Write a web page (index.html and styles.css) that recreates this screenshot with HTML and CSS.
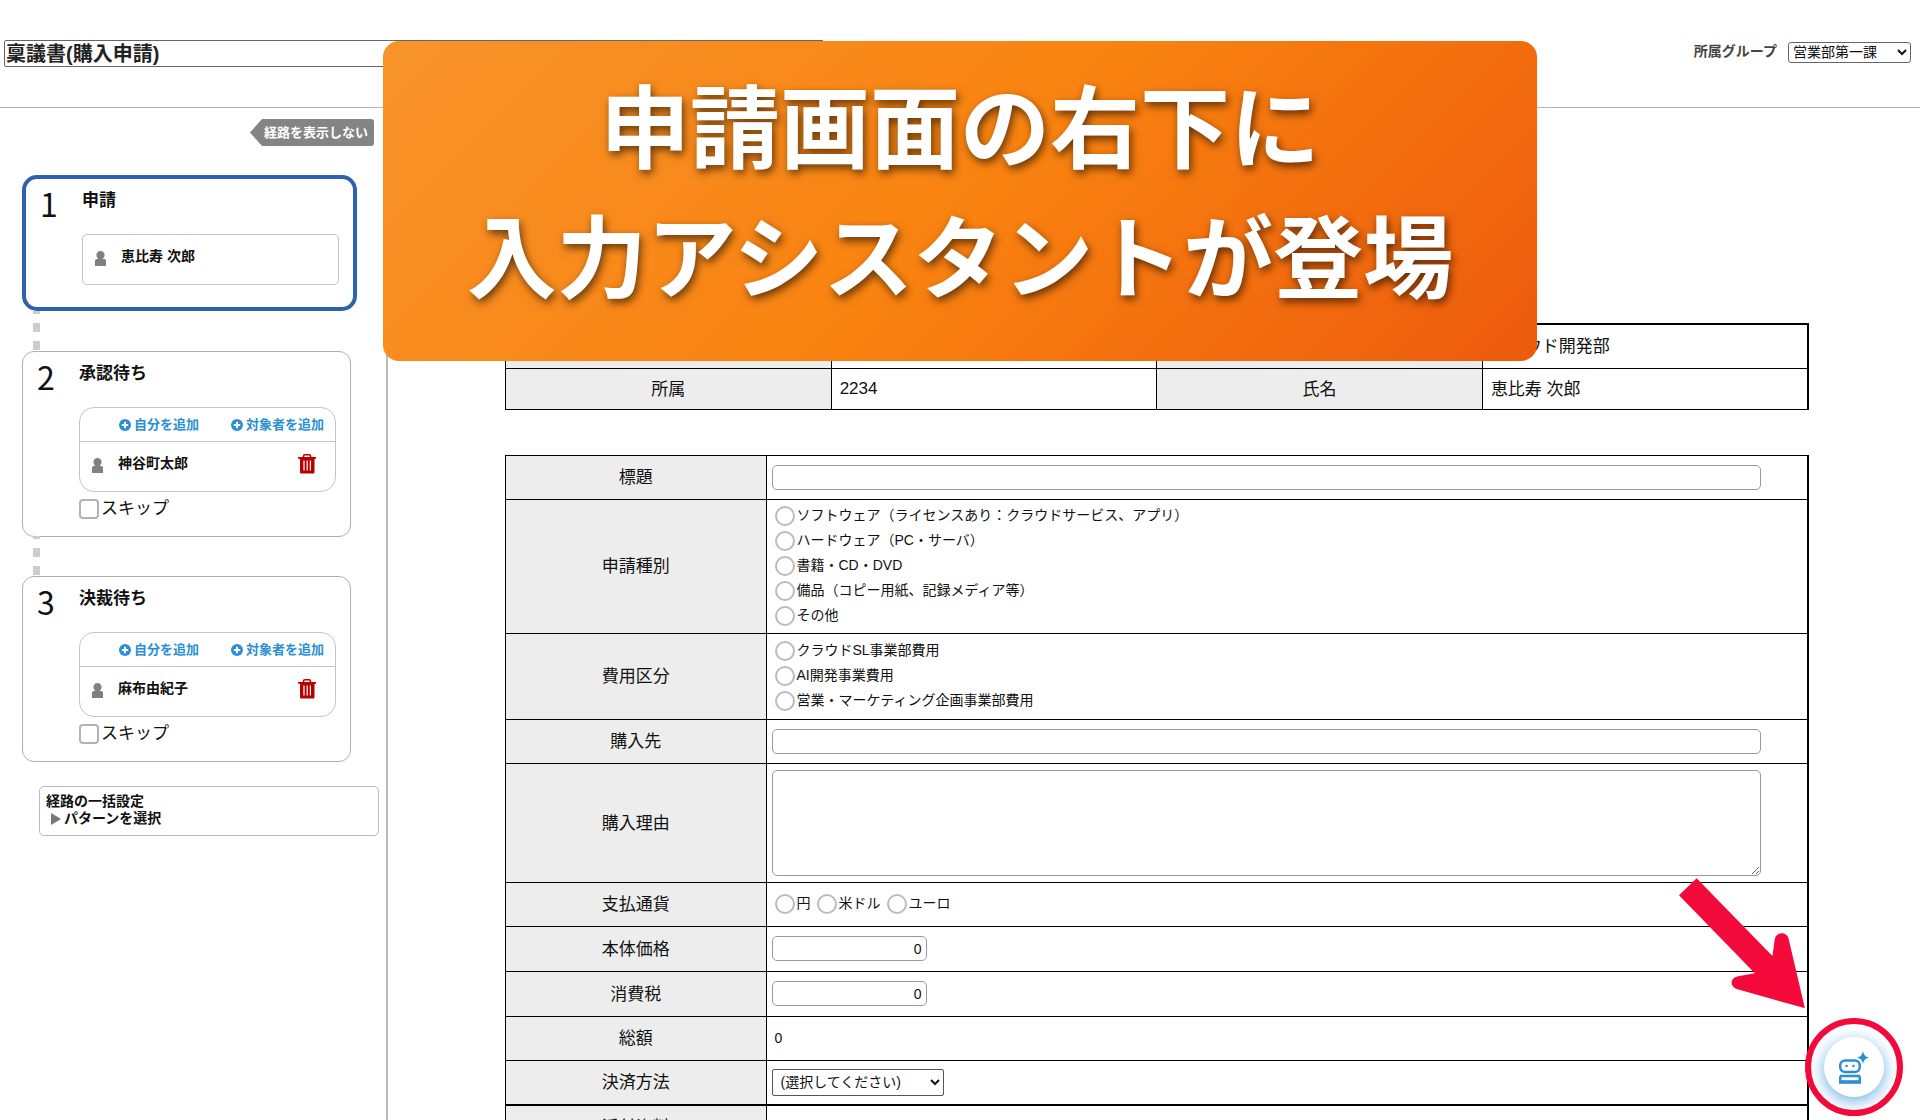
FILE: index.html
```html
<!DOCTYPE html>
<html lang="ja">
<head>
  <meta charset="UTF-8" />
  <meta name="viewport" content="width=device-width, initial-scale=1.0">
  <title>稟議書(購入申請)</title>
  <link rel="stylesheet" href="styles.css">
</head>
<body>
  <!-- shared icons -->
  <svg width="0" height="0" class="sprite">
    <symbol id="icon-user" viewBox="0 0 11 15">
      <path d="M5.500 0C3 0 1.400 1.800 1.400 4c0 1.500.700 2.600 1.600 3.200V8H1.200L0 9.200V15h11V9.200L9.800 8H8v-.8c.900-.6 1.600-1.700 1.600-3.200C9.600 1.800 8 0 5.500 0z" fill="#808080"/>
    </symbol>
    <symbol id="icon-plus" viewBox="0 0 12 12">
      <circle cx="6" cy="6" r="6" fill="#2a8fd4"/>
      <path d="M6 2.800v6.400M2.800 6h6.400" stroke="#fff" stroke-width="2"/>
    </symbol>
    <symbol id="icon-trash" viewBox="0 0 18 20">
      <path d="M5.500 3.500V2.300C5.500 1.300 6.200.8 7 .8h4c.8 0 1.500.5 1.500 1.500v1.200" fill="none" stroke="#b90000" stroke-width="1.600"/>
      <path d="M0 3h18v1.800h-1.500V18c0 1-.6 1.600-1.500 1.600H3.500C2.600 19.600 2 19 2 18V4.800H0z" fill="#b90000"/>
      <path d="M6 6.500v10M9.200 6.500v10M12.400 6.500v10" stroke="#fff" stroke-width="1.200"/>
    </symbol>
  </svg>

  <header class="page-header">
    <input type="text" class="doc-title" value="稟議書(購入申請)" aria-label="書類名" />
    <div class="group-select">
      <label for="group">所属グループ</label>
      <select id="group">
        <option>営業部第一課</option>
      </select>
    </div>
  </header>

  <div class="layout">
    <aside class="route">
      <button type="button" class="route-toggle">経路を表示しない</button>

      <ol class="steps">
        <li class="step current">
          <span class="step-no">1</span>
          <div class="step-body">
            <h2>申請</h2>
            <div class="member-box">
              <div class="member">
                <svg class="user"><use href="#icon-user"/></svg>
                <span>恵比寿 次郎</span>
              </div>
            </div>
          </div>
        </li>
        <li class="step">
          <span class="step-no">2</span>
          <div class="step-body">
            <h2>承認待ち</h2>
            <div class="member-box editable">
              <div class="add-links">
                <a href="#"><svg class="plus"><use href="#icon-plus"/></svg>自分を追加</a>
                <a href="#"><svg class="plus"><use href="#icon-plus"/></svg>対象者を追加</a>
              </div>
              <div class="member">
                <svg class="user"><use href="#icon-user"/></svg>
                <span>神谷町太郎</span>
                <button type="button" class="delete" aria-label="削除"><svg><use href="#icon-trash"/></svg></button>
              </div>
            </div>
            <label class="skip"><input type="checkbox" />スキップ</label>
          </div>
        </li>
        <li class="step">
          <span class="step-no">3</span>
          <div class="step-body">
            <h2>決裁待ち</h2>
            <div class="member-box editable">
              <div class="add-links">
                <a href="#"><svg class="plus"><use href="#icon-plus"/></svg>自分を追加</a>
                <a href="#"><svg class="plus"><use href="#icon-plus"/></svg>対象者を追加</a>
              </div>
              <div class="member">
                <svg class="user"><use href="#icon-user"/></svg>
                <span>麻布由紀子</span>
                <button type="button" class="delete" aria-label="削除"><svg><use href="#icon-trash"/></svg></button>
              </div>
            </div>
            <label class="skip"><input type="checkbox" />スキップ</label>
          </div>
        </li>
      </ol>

      <div class="bulk">
        <strong>経路の一括設定</strong>
        <button type="button" class="pattern">パターンを選択</button>
      </div>
    </aside>

    <main class="form-pane">
      <table class="applicant">
        <tr>
          <th></th>
          <td></td>
          <th></th>
          <td>クラウド開発部</td>
        </tr>
        <tr>
          <th>所属</th>
          <td class="code">2234</td>
          <th>氏名</th>
          <td>恵比寿 次郎</td>
        </tr>
      </table>

      <table class="request">
        <tr>
          <th><label for="subject">標題</label></th>
          <td><input type="text" id="subject" class="wide" /></td>
        </tr>
        <tr class="kind">
          <th>申請種別</th>
          <td>
            <label class="radio"><input type="radio" name="kind" />ソフトウェア（ライセンスあり：クラウドサービス、アプリ）</label>
            <label class="radio"><input type="radio" name="kind" />ハードウェア（PC・サーバ）</label>
            <label class="radio"><input type="radio" name="kind" />書籍・CD・DVD</label>
            <label class="radio"><input type="radio" name="kind" />備品（コピー用紙、記録メディア等）</label>
            <label class="radio"><input type="radio" name="kind" />その他</label>
          </td>
        </tr>
        <tr class="cost">
          <th>費用区分</th>
          <td>
            <label class="radio"><input type="radio" name="cost" />クラウドSL事業部費用</label>
            <label class="radio"><input type="radio" name="cost" />AI開発事業費用</label>
            <label class="radio"><input type="radio" name="cost" />営業・マーケティング企画事業部費用</label>
          </td>
        </tr>
        <tr>
          <th><label for="supplier">購入先</label></th>
          <td><input type="text" id="supplier" class="wide" /></td>
        </tr>
        <tr class="reason">
          <th><label for="reason">購入理由</label></th>
          <td><textarea id="reason" class="wide"></textarea></td>
        </tr>
        <tr>
          <th>支払通貨</th>
          <td>
            <div class="inline-radios">
              <label class="radio"><input type="radio" name="currency" />円</label>
              <label class="radio"><input type="radio" name="currency" />米ドル</label>
              <label class="radio"><input type="radio" name="currency" />ユーロ</label>
            </div>
          </td>
        </tr>
        <tr class="money">
          <th><label for="price">本体価格</label></th>
          <td><input type="text" id="price" class="amount" value="0" /></td>
        </tr>
        <tr class="money">
          <th><label for="tax">消費税</label></th>
          <td><input type="text" id="tax" class="amount" value="0" /></td>
        </tr>
        <tr>
          <th>総額</th>
          <td class="total">0</td>
        </tr>
        <tr class="money">
          <th><label for="payment">決済方法</label></th>
          <td>
            <select id="payment">
              <option>(選択してください)</option>
            </select>
          </td>
        </tr>
        <tr class="attach">
          <th>添付資料</th>
          <td></td>
        </tr>
      </table>
    </main>
  </div>

  <div class="banner">
    <p>申請画面の右下に<br>入力アシスタントが登場</p>
  </div>

  <svg class="arrow" viewBox="0 0 382 393">
    <path d="M0 51 L53 0 L281 234 L288 184 C291 160 326 160 330 184 L378 388 Q379 392 374 390 L176 334 C152 327 152 300 178 295 L228 286 Z" fill="#f30a3b"/>
  </svg>

  <div class="assistant">
    <button type="button" aria-label="入力アシスタント">
      <svg width="30" height="33" viewBox="0 0 30 33">
        <g fill="none" stroke="#2a8fd4" stroke-width="2.500">
          <rect x="1.200" y="9.500" width="19.600" height="11.500" rx="5"/>
          <path d="M2 25h18l.8 1.500V31H1.200v-4.500z"/>
        </g>
        <path d="M0 31h22" stroke="#2a8fd4" stroke-width="3.500"/>
        <circle cx="7.500" cy="15" r="1.300" fill="#2a8fd4"/>
        <circle cx="14.500" cy="15" r="1.300" fill="#2a8fd4"/>
        <path d="M24 0c1 4 2 5.500 6 6.500-4 1-5 2.500-6 6.500-1-4-2-5.500-6-6.500 4-1 5-2.500 6-6.500z" fill="#2a8fd4" stroke="#fff" stroke-width="2" paint-order="stroke"/>
      </svg>
    </button>
  </div>
</body>
</html>
```
FILE: styles.css
```css
* {
  box-sizing: border-box;
}

body {
  margin: 0;
  height: 100vh;
  display: flex;
  flex-direction: column;
  overflow: hidden;
  position: relative;
  background-color: #fff;
  color: #111;
  font-family: "Liberation Sans", "Noto Sans CJK JP", sans-serif;
  font-size: 14px;
}

input, select, textarea, button {
  font-family: inherit;
  font-size: 14px;
  color: #111;
}

.sprite {
  position: absolute;
}

/* Header */
.page-header {
  display: flex;
  justify-content: space-between;
  align-items: flex-start;
  flex: none;
  height: 108px;
  padding: 40px 9px 0 4px;
  border-bottom: 1px solid #b5b5b5;
}

.doc-title {
  width: 43%;
  height: 27px;
  padding: 0 1px 2px;
  border: 1px solid #666;
  border-radius: 2px;
  font-size: 20px;
  font-weight: bold;
  color: #222;
}

.group-select {
  display: flex;
  align-items: center;
  gap: 11px;
}

.group-select label {
  padding-bottom: 4px;
  font-weight: bold;
  color: #444;
}

.group-select select {
  width: 123px;
  height: 21px;
  padding: 0 0 2px;
  border: 1px solid #666;
  border-radius: 3px;
  background-color: #fff;
}

.layout {
  flex: 1;
  display: flex;
  min-height: 0;
}

/* Approval route */
.route {
  flex: none;
  width: 388px;
  padding: 11px 7px 0 22px;
  border-right: 2px solid #bbb;
}

.route-toggle {
  display: block;
  width: 124px;
  height: 27px;
  margin: 0 5px 29px auto;
  padding: 0 0 0 8px;
  border: none;
  border-radius: 3px;
  background-color: #848484;
  clip-path: polygon(0 50%, 12px 0, 100% 0, 100% 100%, 12px 100%);
  color: #fff;
  font-size: 13px;
  font-weight: bold;
  line-height: 27px;
}

.steps {
  list-style: none;
  margin: 0;
  padding: 0;
}

.step {
  position: relative;
  display: flex;
  width: 329px;
  height: 186px;
  margin-bottom: 39px;
  padding: 10px 14px 0 0;
  border: 1px solid #b0b0b0;
  border-radius: 12px;
}

.step.current {
  width: 335px;
  height: 136px;
  margin-bottom: 40px;
  border: 4px solid #2f62ae;
  border-radius: 15px;
}

/* dotted line down to the next step */
.step:not(:last-child)::after {
  content: "";
  position: absolute;
  top: 100%;
  left: 10px;
  width: 7px;
  height: 39px;
  background: repeating-linear-gradient(0deg, #ccc 0 9px, transparent 9px 18px);
}

.step.current::after {
  left: 7px;
  margin-top: 4px;
}

.step:last-child {
  margin-bottom: 24px;
}

.step-no {
  flex: none;
  width: 56px;
  padding-left: 14px;
  font-family: "Noto Sans CJK JP", sans-serif;
  font-size: 32px;
  line-height: 28px;
}

.step-body {
  flex: 1;
}

.step h2 {
  margin: 0 0 21px;
  font-size: 17px;
  line-height: 24px;
}

.member-box {
  border: 1px solid #c4c4c4;
  border-radius: 5px;
}

.member-box.editable {
  border-radius: 15px;
}

.add-links {
  display: flex;
  justify-content: flex-end;
  gap: 32px;
  padding-right: 11px;
  border-bottom: 1px solid #c4c4c4;
}

.add-links a {
  display: flex;
  align-items: center;
  gap: 3px;
  color: #2a8fd4;
  font-size: 13px;
  font-weight: bold;
  line-height: 33px;
  text-decoration: none;
}

.plus {
  width: 12px;
  height: 12px;
}

.member {
  display: flex;
  align-items: center;
  height: 49px;
  padding: 0 19px 9px 12px;
  font-weight: bold;
}

.user {
  width: 11px;
  height: 15px;
  margin: 6px 15px 0 0;
}

.delete {
  margin: 3px 0 0 auto;
  padding: 0;
  border: none;
  background: none;
  cursor: pointer;
}

.delete svg {
  display: block;
  width: 18px;
  height: 20px;
}

.skip {
  display: flex;
  align-items: center;
  gap: 2px;
  margin-top: 7px;
  font-size: 17px;
  line-height: 20px;
}

.skip input {
  appearance: none;
  width: 20px;
  height: 20px;
  margin: 0;
  border: 2px solid #b3b3b3;
  border-radius: 4px;
}

.bulk {
  margin-left: 17px;
  padding: 6px;
  height: 50px;
  border: 1px solid #bbb;
  border-radius: 5px;
  line-height: 17px;
}

.bulk strong {
  display: block;
}

.pattern {
  display: flex;
  align-items: center;
  gap: 3px;
  padding: 0 0 0 5px;
  border: none;
  background: none;
  font-weight: bold;
  line-height: 17px;
}

.pattern::before {
  content: "";
  border-left: 10px solid #777;
  border-top: 6px solid transparent;
  border-bottom: 6px solid transparent;
}

/* Form */
.form-pane {
  flex: 1;
  overflow: hidden;
  padding: 215px 111px 0 117px;
}

table {
  width: 100%;
  border-collapse: collapse;
  table-layout: fixed;
  border-right: 2px solid #000;
  font-size: 17px;
}

th, td {
  height: 44px;
  padding: 0 5px;
  border: 1px solid #000;
}

th {
  padding-bottom: 3px;
  background-color: #ededed;
  font-weight: normal;
}

td {
  text-align: left;
}

.applicant {
  margin-bottom: 45px;
  border-top: 2px solid #000;
}

.applicant td {
  padding: 0 0 3px 8px;
}

.applicant td.code {
  padding-bottom: 0;
}

.applicant tr:last-child > * {
  height: 41px;
}

.request th {
  width: 20%;
}

.request .kind > * {
  height: 134px;
}

.request .cost > * {
  height: 86px;
}

.request .reason > * {
  height: 119px;
}

.request .money > * {
  height: 45px;
}

.request .attach > * {
  border-top: 2px solid #000;
}

.wide, .amount {
  display: block;
  height: 25px;
  border: 1px solid #999;
  border-radius: 5px;
}

.wide {
  width: 96%;
}

textarea.wide {
  height: 106px;
}

.amount {
  width: 155px;
  padding: 0 4px;
  text-align: right;
}

.radio {
  display: flex;
  align-items: center;
  gap: 2px;
  padding-left: 3px;
  font-size: 14px;
  line-height: 23px;
  padding-bottom: 2px;
}

.radio input {
  appearance: none;
  width: 20px;
  height: 20px;
  margin: 2px 0 0;
  border: 2px solid #bbb;
  border-radius: 50%;
}

.inline-radios {
  display: flex;
  gap: 3px;
}

td.total {
  padding-left: 8px;
  font-size: 14px;
}

.request select {
  display: block;
  width: 172px;
  height: 27px;
  padding: 0 4px 1px;
  border: 1px solid #555;
  border-radius: 2px;
  background-color: #fff;
}

/* Overlays */
.banner {
  position: absolute;
  top: 41px;
  left: 383px;
  right: 383px;
  height: 320px;
  border-radius: 16px;
  background: linear-gradient(135deg, #f8932b 0%, #f98310 50%, #ed5a0d 100%);
}

.banner p {
  margin: 0;
  padding-top: 16px;
  color: #fff;
  font-family: "Noto Sans CJK JP", sans-serif;
  font-size: 90px;
  font-weight: bold;
  line-height: 130px;
  text-align: center;
  white-space: nowrap;
  text-shadow: 2px 4px 8px rgba(0, 0, 0, 0.6);
}

.arrow {
  position: absolute;
  right: 114px;
  bottom: 111px;
  width: 127px;
  height: 131px;
}

.assistant {
  position: absolute;
  right: 17px;
  bottom: 4px;
  display: flex;
  justify-content: center;
  align-items: center;
  width: 98px;
  height: 98px;
  border: 6px solid #f30a3b;
  border-radius: 50%;
  background-color: #fff;
  overflow: hidden;
}

.assistant button {
  display: flex;
  justify-content: center;
  align-items: center;
  width: 60px;
  height: 60px;
  padding: 0;
  border: none;
  border-radius: 50%;
  background-color: #fff;
  box-shadow: 0 4px 16px rgba(42, 143, 212, 0.7);
  cursor: pointer;
}
```
